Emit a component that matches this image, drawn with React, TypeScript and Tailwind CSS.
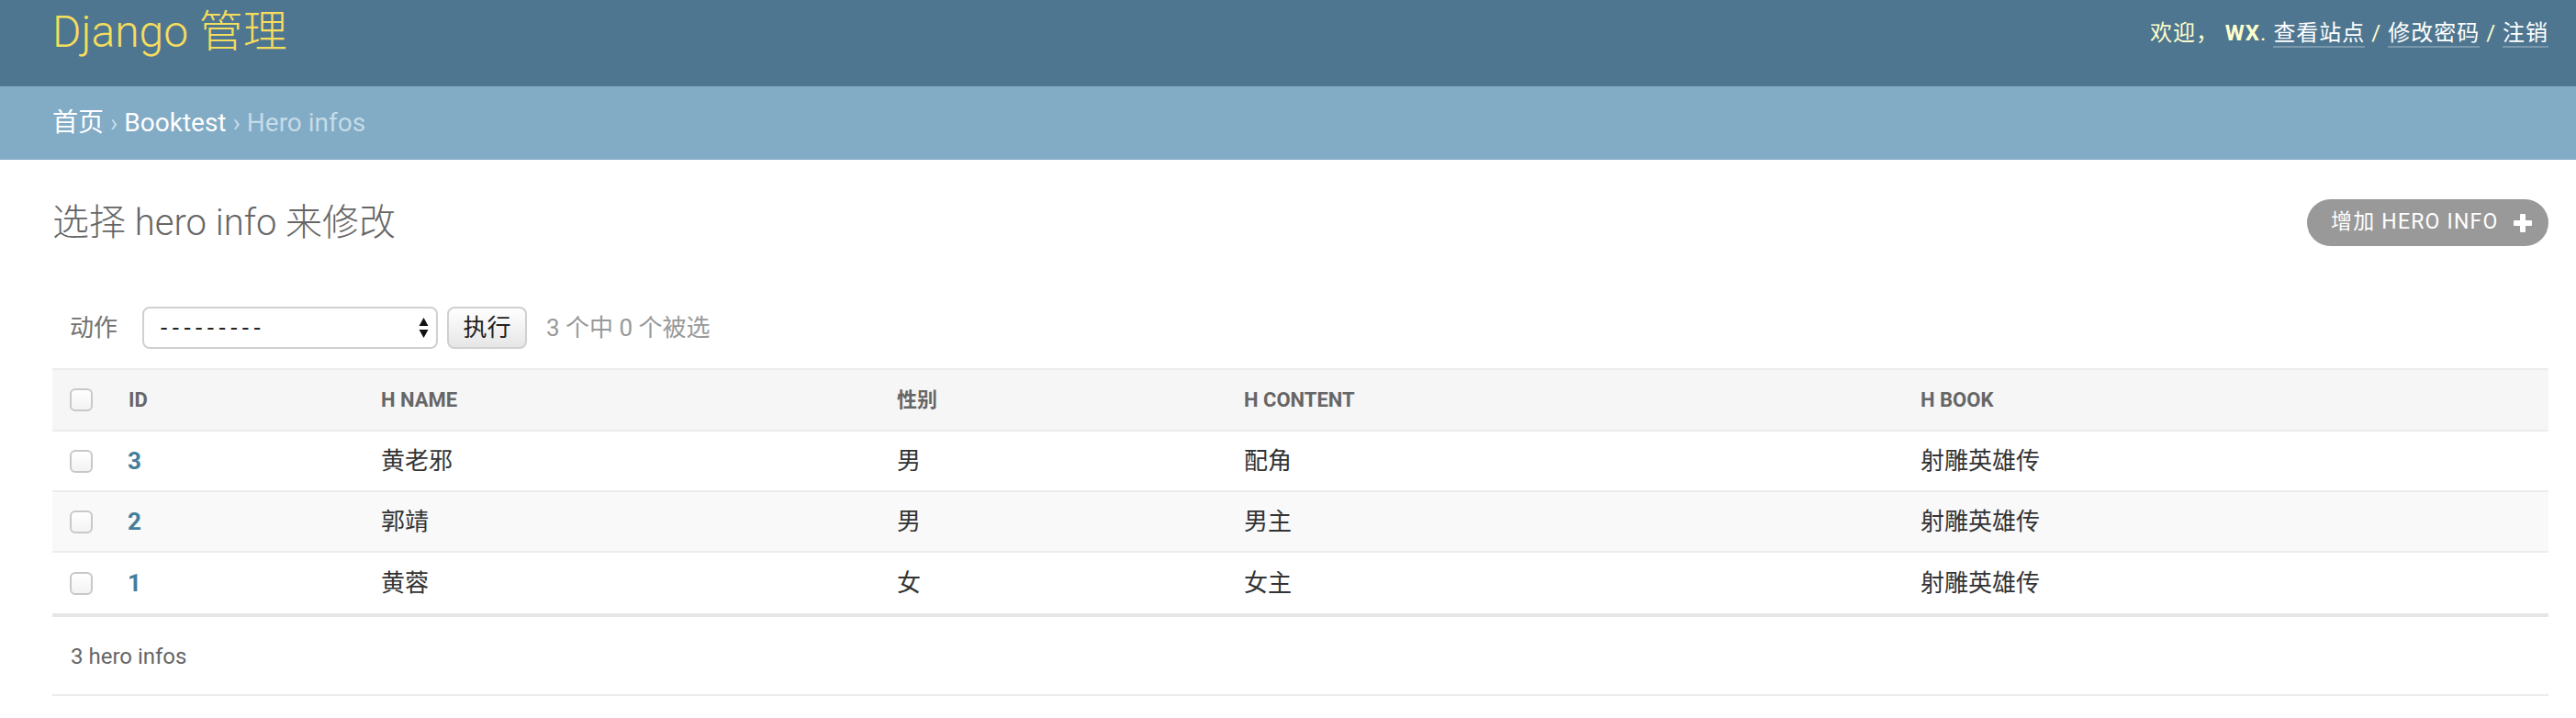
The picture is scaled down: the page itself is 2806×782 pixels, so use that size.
import React from "react";

type Hero = {
  id: number;
  name: string;
  gender: string;
  content: string;
  book: string;
};

const heroes: Hero[] = [
  { id: 3, name: "黄老邪", gender: "男", content: "配角", book: "射雕英雄传" },
  { id: 2, name: "郭靖", gender: "男", content: "男主", book: "射雕英雄传" },
  { id: 1, name: "黄蓉", gender: "女", content: "女主", book: "射雕英雄传" },
];

const cols = "grid grid-cols-[68px_274px_562px_378px_737px_1fr] items-center";

const Checkbox = () => (
  <div className="h-[25px] w-[25px] rounded-[6px] border-2 border-[#c8c8c8] bg-gradient-to-b from-white to-[#f3f3f3]" />
);

const App = () => {
  return (
    <div className="min-h-screen bg-white font-[Roboto,'Noto_Sans_CJK_SC',sans-serif]">
      {/* Header */}
      <div className="flex h-[94px] items-start justify-between bg-[#4e7690] pl-[57px] pr-[30px]">
        <div className="pt-[6px] text-[48px] font-light leading-[57px] text-[#f5dd5d]">
          Django 管理
        </div>
        <div className="pt-[22px] text-[24px] leading-[29px] tracking-[1px] text-[#ffffcc]">
          欢迎， <strong className="font-bold">WX</strong>.{" "}
          <span className="border-b-2 border-white/25 text-white">查看站点</span> /{" "}
          <span className="border-b-2 border-white/25 text-white">修改密码</span> /{" "}
          <span className="border-b-2 border-white/25 text-white">注销</span>
        </div>
      </div>

      {/* Breadcrumbs */}
      <div className="h-[80px] bg-[#82abc5] pl-[57px] pt-[23px] text-[28px] leading-[34px] text-[#c4dce8]">
        <span className="text-white">首页</span> ›{" "}
        <span className="text-white">Booktest</span> › Hero infos
      </div>

      {/* Content */}
      <div className="pl-[57px] pr-[30px]">
        <div className="flex items-center justify-between pt-[43px]">
          <h1 className="text-[40px] font-light leading-[48px] text-[#666]">
            选择 hero info 来修改
          </h1>
          <div className="flex h-[51px] w-[263px] items-center rounded-full bg-[#999] pl-[26px] text-[23px] tracking-[1.2px] text-white">
            <span className="flex-1">增加 HERO INFO</span>
            <svg className="mr-[17px] h-[22px] w-[22px]" viewBox="0 0 22 22">
              <rect x="8" y="1" width="6" height="20" rx="1" fill="white" />
              <rect x="1" y="8" width="20" height="6" rx="1" fill="white" />
            </svg>
          </div>
        </div>

        {/* Actions */}
        <div className="mt-[66px] flex h-[46px] items-center pl-[19px] text-[26px]">
          <span className="text-[#707070]">动作</span>
          <div className="ml-[27px] flex h-[46px] w-[322px] items-center justify-between rounded-[8px] border-2 border-[#d0d0d0] bg-white pl-[18px] pr-[8px]">
            <span className="tracking-[5.5px] text-[#222]">---------</span>
            <svg className="h-[24px] w-[11px]" viewBox="0 0 11 24">
              <path d="M5.5 1 L10.5 10 L0.5 10 Z" fill="#111" />
              <path d="M5.5 23 L10.5 14 L0.5 14 Z" fill="#111" />
            </svg>
          </div>
          <div className="ml-[10px] flex h-[46px] w-[87px] items-center justify-center rounded-[8px] border-2 border-[#d0d0d0] bg-gradient-to-b from-white to-[#e6e6e6] text-[#222]">
            执行
          </div>
          <span className="ml-[21px] text-[#999]">3 个中 0 个被选</span>
        </div>

        {/* Table */}
        <div className="mt-[21px]">
          <div
            className={`${cols} h-[69px] border-y-2 border-[#ececec] bg-[#f6f6f6] text-[22px] font-bold uppercase text-[#666]`}
          >
            <div className="pl-[19px]">
              <Checkbox />
            </div>
            <div className="pl-[15px]">ID</div>
            <div className="pl-[16px]">H name</div>
            <div className="pl-[16px]">性别</div>
            <div className="pl-[16px]">H content</div>
            <div className="pl-[16px]">H book</div>
          </div>
          {heroes.map((h, i) => (
            <div
              key={h.id}
              className={`${cols} text-[26px] text-[#333] ${
                i === heroes.length - 1
                  ? "h-[70px] border-b-4 border-[#e6e6e6] bg-white"
                  : "h-[66px] border-b-2 border-[#ececec]"
              } ${i === 1 ? "bg-[#f9f9f9]" : "bg-white"}`}
            >
              <div className="pl-[19px]">
                <Checkbox />
              </div>
              <div className="pl-[14px] font-bold text-[#447e9b]">{h.id}</div>
              <div className="pl-[16px]">{h.name}</div>
              <div className="pl-[16px]">{h.gender}</div>
              <div className="pl-[16px]">{h.content}</div>
              <div className="pl-[16px]">{h.book}</div>
            </div>
          ))}
          <div className="border-b-2 border-[#ececec] pb-[26px] pl-[20px] pt-[29px] text-[24px] leading-[29px] text-[#666]">
            3 hero infos
          </div>
        </div>
      </div>
    </div>
  );
};

export default App;
